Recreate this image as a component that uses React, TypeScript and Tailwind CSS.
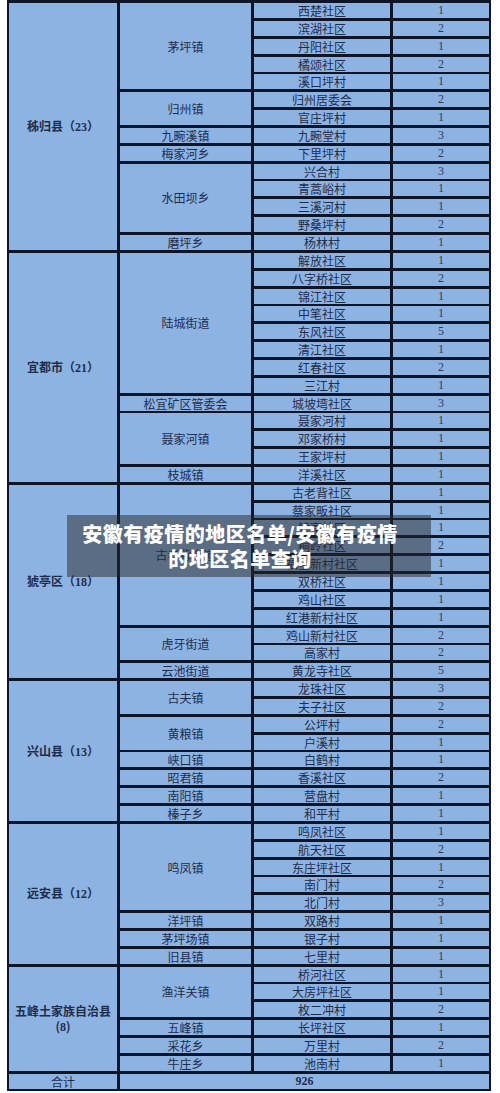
type Town = { name: string; rows: [string, number][] }
type County = { name: string; num: number; towns: Town[]; twoLine?: boolean }

const counties: County[] = [
  {
    name: "秭归县",
    num: 23,
    towns: [
      { name: "茅坪镇", rows: [["西楚社区", 1], ["滨湖社区", 2], ["丹阳社区", 1], ["橘颂社区", 2], ["溪口坪村", 1]] },
      { name: "归州镇", rows: [["归州居委会", 2], ["官庄坪村", 1]] },
      { name: "九畹溪镇", rows: [["九畹堂村", 3]] },
      { name: "梅家河乡", rows: [["下里坪村", 2]] },
      { name: "水田坝乡", rows: [["兴合村", 3], ["青蒿峪村", 1], ["三溪河村", 1], ["野桑坪村", 2]] },
      { name: "磨坪乡", rows: [["杨林村", 1]] },
    ],
  },
  {
    name: "宜都市",
    num: 21,
    towns: [
      {
        name: "陆城街道",
        rows: [["解放社区", 1], ["八字桥社区", 2], ["锦江社区", 1], ["中笔社区", 1], ["东风社区", 5], ["清江社区", 1], ["红春社区", 2], ["三江村", 1]],
      },
      { name: "松宜矿区管委会", rows: [["城坡塆社区", 3]] },
      { name: "聂家河镇", rows: [["聂家河村", 1], ["邓家桥村", 1], ["王家坪村", 1]] },
      { name: "枝城镇", rows: [["洋溪社区", 1]] },
    ],
  },
  {
    name: "猇亭区",
    num: 18,
    towns: [
      {
        name: "古老背街道",
        rows: [["古老背社区", 1], ["蔡家畈社区", 1], ["猇亭社区", 1], ["桐岭社区", 2], ["福星新村社区", 1], ["双桥社区", 1], ["鸡山社区", 1], ["红港新村社区", 1]],
      },
      { name: "虎牙街道", rows: [["鸡山新村社区", 2], ["高家村", 2]] },
      { name: "云池街道", rows: [["黄龙寺社区", 5]] },
    ],
  },
  {
    name: "兴山县",
    num: 13,
    towns: [
      { name: "古夫镇", rows: [["龙珠社区", 3], ["夫子社区", 2]] },
      { name: "黄粮镇", rows: [["公坪村", 2], ["户溪村", 1]] },
      { name: "峡口镇", rows: [["白鹤村", 1]] },
      { name: "昭君镇", rows: [["香溪社区", 2]] },
      { name: "南阳镇", rows: [["营盘村", 1]] },
      { name: "榛子乡", rows: [["和平村", 1]] },
    ],
  },
  {
    name: "远安县",
    num: 12,
    towns: [
      { name: "鸣凤镇", rows: [["鸣凤社区", 1], ["航天社区", 2], ["东庄坪社区", 1], ["南门村", 2], ["北门村", 3]] },
      { name: "洋坪镇", rows: [["双路村", 1]] },
      { name: "茅坪场镇", rows: [["银子村", 1]] },
      { name: "旧县镇", rows: [["七里村", 1]] },
    ],
  },
  {
    name: "五峰土家族自治县",
    num: 8,
    twoLine: true,
    towns: [
      { name: "渔洋关镇", rows: [["桥河社区", 1], ["大房坪社区", 1], ["枚二冲村", 2]] },
      { name: "五峰镇", rows: [["长坪社区", 1]] },
      { name: "采花乡", rows: [["万里村", 2]] },
      { name: "牛庄乡", rows: [["池南村", 1]] },
    ],
  },
]

const cjk = "font-['Noto_Sans_CJK_SC',sans-serif]"
const serif = "font-['Liberation_Serif','Noto_Sans_CJK_SC',serif]"
const cell = "bg-[#8db3e2] flex items-center justify-center text-[12px] leading-[15px] text-[#1f2d4d]"

function CountyLabel({ c }: { c: County }) {
  const num = (
    <>
      （<span className={serif}>{c.num}</span>）
    </>
  )
  if (c.twoLine) {
    return (
      <div className="flex flex-col items-center">
        <span>{c.name}</span>
        <span className="-mt-[0px]">
          (<span className={serif}>{c.num}</span>)
        </span>
      </div>
    )
  }
  return (
    <span>
      {c.name}
      {num}
    </span>
  )
}

export default function App() {
  return (
    <div className={`relative bg-white h-[1093px] ${cjk}`}>
      <div className="ml-[7px] w-[484px] bg-[#0d1527] pt-[3px] pb-[2px] px-[2px] flex flex-col gap-[2.85px]">
        {counties.map((c) => (
          <div key={c.name} className="flex gap-[3px]">
            <div className={`${cell} w-[108px] shrink-0 font-bold`}>
              <CountyLabel c={c} />
            </div>
            <div className="flex-1 flex flex-col gap-[2.85px]">
              {c.towns.map((t) => (
                <div key={t.name} className="flex gap-[3px]">
                  <div className={`${cell} w-[131px] shrink-0`}>{t.name}</div>
                  <div className="flex-1 flex flex-col gap-[2.85px]">
                    {t.rows.map(([v, n]) => (
                      <div key={v} className="flex gap-[3px] h-[15px]">
                        <div className={`${cell} w-[136px] shrink-0`}>{v}</div>
                        <div className={`${cell} flex-1 ${serif} text-[#2b3b62]`}>{n}</div>
                      </div>
                    ))}
                  </div>
                </div>
              ))}
            </div>
          </div>
        ))}
        <div className="flex gap-[3px] h-[15px]">
          <div className={`${cell} w-[108px] shrink-0`}>合计</div>
          <div className={`${cell} flex-1 ${serif} font-bold`}>926</div>
        </div>
      </div>

      <div className="absolute left-[67px] top-[515px] w-[364px] h-[62px] bg-[rgba(40,40,40,0.5)] flex flex-col items-center justify-center pl-[4px] pr-[22px]">
        <p className="text-white font-black text-[20px] leading-[25px] tracking-[0.5px] text-center whitespace-nowrap">
          安徽有疫情的地区名单/安徽有疫情
          <br />
          的地区名单查询
        </p>
      </div>
    </div>
  )
}
